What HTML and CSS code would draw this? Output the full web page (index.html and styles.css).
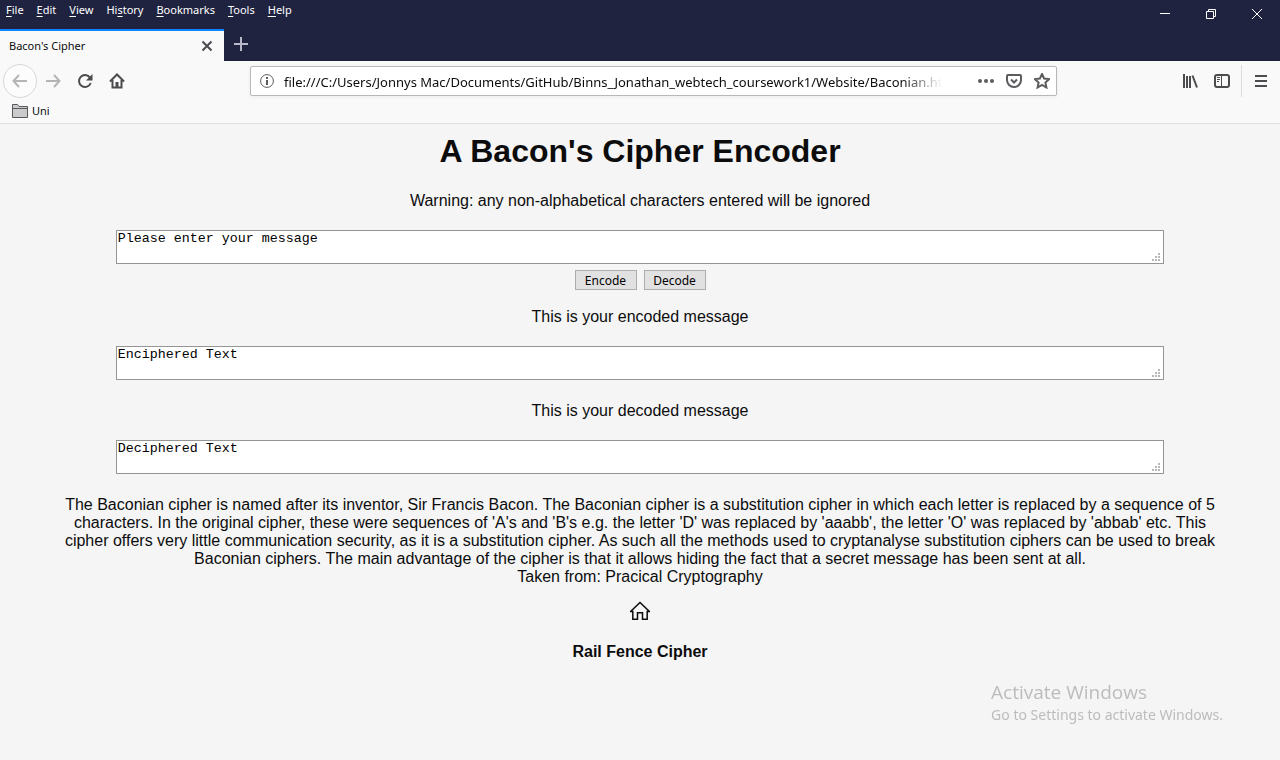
FILE: index.html
```html
<!DOCTYPE html>
<html lang="en">
<head>
<meta charset="utf-8">
<title>Bacon's Cipher</title>
<link rel="stylesheet" href="styles.css">
</head>
<body>
<header class="browser">
  <div class="titlebar">
    <nav class="menu" aria-label="Menu bar">
      <button><u>F</u>ile</button>
      <button><u>E</u>dit</button>
      <button><u>V</u>iew</button>
      <button>Hi<u>s</u>tory</button>
      <button><u>B</u>ookmarks</button>
      <button><u>T</u>ools</button>
      <button><u>H</u>elp</button>
    </nav>
    <div class="window-controls">
      <button aria-label="Minimize"><svg width="12" height="12" viewBox="0 0 12 12"><path d="M1 5.500h10"/></svg></button>
      <button aria-label="Restore"><svg width="12" height="12" viewBox="0 0 12 12"><path d="M1.500 3.500h7v7h-7zM3.500 3.500v-2h7v7h-2"/></svg></button>
      <button aria-label="Close"><svg width="12" height="12" viewBox="0 0 12 12"><path d="M1 1l10 10M11 1L1 11"/></svg></button>
    </div>
  </div>
  <div class="tabs">
    <div class="tab">
      <span class="tab-title">Bacon's Cipher</span>
      <button class="tab-close" aria-label="Close tab"><svg width="12" height="12" viewBox="0 0 12 12"><path d="M1.500 1.500l9 9M10.500 1.500l-9 9"/></svg></button>
    </div>
    <button class="new-tab" aria-label="New tab"><svg width="16" height="16" viewBox="0 0 16 16"><path d="M8 1v14M1 8h14"/></svg></button>
  </div>
  <div class="toolbar">
    <div class="nav-buttons">
      <button class="back" aria-label="Back"><svg class="faded" width="16" height="16" viewBox="0 0 16 16"><path d="M15 8H1.500M7 2L1.500 8 7 14"/></svg></button>
      <button aria-label="Forward"><svg class="faded" width="16" height="16" viewBox="0 0 16 16"><path d="M1 8h13.500M9 2l5.500 6L9 14"/></svg></button>
      <button aria-label="Reload"><svg width="16" height="16" viewBox="0 0 16 16"><path d="M13 4.600A6 6 0 1 0 13.700 10"/><path class="solid" d="M15.500 1v6.500H9z"/></svg></button>
      <button aria-label="Home"><svg width="16" height="16" viewBox="0 0 16 16"><path d="M1 8.500L8 1.500l7 7M3.500 7v7.500h9V7"/><path class="solid" d="M6.500 9h3v6h-3z"/></svg></button>
    </div>
    <div class="urlbar">
      <svg class="info" width="14" height="14" viewBox="0 0 14 14"><circle cx="7" cy="7" r="6.400"/><path class="stem" d="M7 6v5M7 3v2"/></svg>
      <input class="url" aria-label="Address" value="file:///C:/Users/Jonnys Mac/Documents/GitHub/Binns_Jonathan_webtech_coursework1/Website/Baconian.html">
      <button aria-label="Page actions"><svg width="16" height="16" viewBox="0 0 16 16"><g class="solid"><circle cx="2" cy="8" r="2"/><circle cx="8" cy="8" r="2"/><circle cx="14" cy="8" r="2"/></g></svg></button>
      <button aria-label="Save to Pocket"><svg width="16" height="16" viewBox="0 0 16 16"><path d="M2 2h12q1 0 1 1v4a7 7 0 0 1-14 0V3q0-1 1-1zM5 6.500l3 3 3-3"/></svg></button>
      <button aria-label="Bookmark this page"><svg width="16" height="16" viewBox="0 0 16 16"><path d="M8 1l2.100 4.500 5 .6-3.700 3.400 1 5L8 12l-4.400 2.500 1-5L.9 6.100l5-.6z"/></svg></button>
    </div>
    <div class="tools">
      <button aria-label="Library"><svg width="16" height="16" viewBox="0 0 16 16"><path d="M2 1v14M5 3v12M8 3v12M10.500 2.500l4.500 12"/></svg></button>
      <button aria-label="Sidebars"><svg width="16" height="16" viewBox="0 0 16 16"><rect x="1" y="2" width="14" height="12" rx="2"/><path class="thin" d="M7.500 2v12M3 4.500h3M3 6.500h3M3 8.500h2"/></svg></button>
      <button class="app-menu" aria-label="Open menu"><svg width="16" height="16" viewBox="0 0 16 16"><path d="M2 3h12M2 8h12M2 13h12"/></svg></button>
    </div>
  </div>
  <div class="bookmarks">
    <button class="bookmark"><svg width="16" height="14" viewBox="0 0 16 14"><path d="M.5 13.500V.5h5l1.500 2h8.500v11zM.5 4.500h15"/></svg>Uni</button>
  </div>
</header>

<main class="page">
  <h1>A Bacon's Cipher Encoder</h1>
  <p><label for="message">Warning: any non-alphabetical characters entered will be ignored</label></p>
  <div class="field"><textarea id="message" rows="2">Please enter your message</textarea><svg class="grip" width="9" height="9" viewBox="0 0 9 9"><path d="M6 0h2v2H6zM3 3h2v2H3zM6 3h2v2H6zM0 6h2v2H0zM3 6h2v2H3zM6 6h2v2H6z"/></svg></div>
  <div class="actions"><button>Encode</button><button>Decode</button></div>
  <p class="encoded-label"><label for="encoded">This is your encoded message</label></p>
  <div class="field"><textarea id="encoded" rows="2">Enciphered Text</textarea><svg class="grip" width="9" height="9" viewBox="0 0 9 9"><path d="M6 0h2v2H6zM3 3h2v2H3zM6 3h2v2H6zM0 6h2v2H0zM3 6h2v2H3zM6 6h2v2H6z"/></svg></div>
  <p><label for="decoded">This is your decoded message</label></p>
  <div class="field"><textarea id="decoded" rows="2">Deciphered Text</textarea><svg class="grip" width="9" height="9" viewBox="0 0 9 9"><path d="M6 0h2v2H6zM3 3h2v2H3zM6 3h2v2H6zM0 6h2v2H0zM3 6h2v2H3zM6 6h2v2H6z"/></svg></div>
  <p class="about">The Baconian cipher is named after its inventor, Sir Francis Bacon. The Baconian cipher is a substitution cipher in which each letter is replaced by a sequence of 5 characters. In the original cipher, these were sequences of 'A's and 'B's e.g. the letter 'D' was replaced by 'aaabb', the letter 'O' was replaced by 'abbab' etc. This cipher offers very little communication security, as it is a substitution cipher. As such all the methods used to cryptanalyse substitution ciphers can be used to break Baconian ciphers. The main advantage of the cipher is that it allows hiding the fact that a secret message has been sent at all.<br>Taken from: Pracical Cryptography</p>
  <a class="home" href="#" aria-label="Home"><svg width="20" height="20" viewBox="0 0 20 20"><path d="M.6 10.500h2.200v7.800h4.700v-6.500h5v6.500h4.700v-7.800h2.200L10 1.500z"/></svg></a>
  <a class="next" href="#">Rail Fence Cipher</a>
</main>

<aside class="watermark">
  <div class="watermark-title">Activate Windows</div>
  <div>Go to Settings to activate Windows.</div>
</aside>
</body>
</html>
```

FILE: styles.css
```css
* { box-sizing: border-box; }

body {
  margin: 0;
  min-height: 100vh;
  background: #f5f5f5;
  color: #0c0c0d;
  font: 16px/18px "Liberation Sans", Arial, sans-serif;
}

button { margin: 0; padding: 0; border: 0; background: none; color: inherit; font: inherit; }

svg { display: block; fill: none; stroke: currentColor; }

/* Browser window */
.browser {
  background: #f9f9fa;
  border-bottom: 1px solid #e0e0e1;
  color: #0c0c0d;
  font: 12px/16px "Noto Sans", "Open Sans", sans-serif;
}

.titlebar { display: flex; justify-content: space-between; height: 29px; background: #202340; color: #fff; }
.menu { display: flex; align-items: flex-start; gap: 13px; padding: 2px 6px; font-size: 11px; }
.menu u { text-underline-offset: 2px; }
.window-controls { display: flex; }
.window-controls button { display: grid; place-items: center; width: 46px; height: 28px; }

.tabs { display: flex; height: 32px; background: #202340; }
.tab {
  display: flex;
  align-items: center;
  justify-content: space-between;
  width: 224px;
  padding: 0 11px 0 9px;
  border-top: 2px solid #0a84ff;
  background: #f9f9fa;
  font-size: 11px;
}
.tab-close { color: #4a4a4f; }
.tab-close svg { stroke-width: 2; }
.new-tab { display: grid; place-items: center; width: 34px; height: 30px; color: #b8b8ca; }
.new-tab svg { stroke-width: 2; }

.toolbar { display: flex; align-items: center; height: 40px; color: #4c4c4f; }
.toolbar svg { stroke-width: 2; }
.toolbar .faded { color: #b5b5b6; }
.toolbar .thin { stroke-width: 1; }
.solid { fill: currentColor; stroke: none; }
.nav-buttons { display: flex; align-items: center; width: 250px; padding-left: 3px; }
.nav-buttons button { display: grid; place-items: center; width: 32px; height: 34px; }
.nav-buttons .back { width: 34px; border: 1px solid #d7d7d8; border-radius: 50%; background: #fcfcfc; }

.urlbar {
  display: flex;
  flex: 1;
  align-items: center;
  gap: 12px;
  min-width: 0;
  height: 30px;
  padding: 0 6px 0 9px;
  border: 1px solid #b8b8b9;
  border-radius: 2px;
  background: #fff;
  box-shadow: 0 1px 4px rgba(0, 0, 0, .06);
  color: #5c5c5f;
}
.toolbar .info { flex: none; margin-right: -2px; stroke-width: 1; }
.info .stem { stroke-width: 2; }
.url {
  flex: 1;
  min-width: 0;
  height: 24px;
  margin-right: 24px;
  padding: 2px 0 0;
  border: 0;
  outline: 0;
  background: none;
  color: #0c0c0d;
  font: 13px/18px "Noto Sans", "Open Sans", sans-serif;
  -webkit-mask-image: linear-gradient(to left, transparent, #000 40px);
  mask-image: linear-gradient(to left, transparent, #000 40px);
}

.tools { display: flex; align-items: center; justify-content: flex-end; width: 223px; }
.tools button { display: grid; place-items: center; width: 32px; height: 32px; }
.tools .app-menu { width: 39px; margin-left: 3px; border-left: 1px solid #dcdcdd; }

.bookmarks { display: flex; height: 22px; padding-left: 12px; }
.bookmark { display: flex; align-items: center; gap: 4px; height: 20px; font-size: 11px; }
.bookmark svg { color: #59595b; fill: #cbcbcd; }

/* Cipher page */
.page { width: 90%; margin: 0 auto; padding: 9px 0 16px; text-align: center; }
.page h1 { margin: 0 0 22px; font-size: 32px; line-height: 37px; }
.page p { margin: 22px 0 20px; }
.field { position: relative; width: 91%; margin: 0 auto; }
.field textarea {
  display: block;
  width: 100%;
  height: 34px;
  padding: 0 1px;
  border: 1px solid #959595;
  border-radius: 0;
  outline: 0;
  background: #fff;
  color: #000;
  font-family: "Liberation Mono", "Courier New", monospace;
  line-height: 15px;
  overflow: hidden;
  resize: none;
}
.grip { position: absolute; right: 3px; bottom: 2px; fill: #b8b8b8; stroke: none; pointer-events: none; }
.actions { display: flex; justify-content: center; gap: 7px; margin-top: 6px; }
.actions button {
  min-width: 62px;
  height: 20px;
  padding-top: 1px;
  border: 1px solid #adadad;
  background: #e1e1e1;
  color: #000;
  font: 12px/17px "Noto Sans", "Open Sans", sans-serif;
}
.page .encoded-label { margin-top: 18px; }
.page .about { margin-bottom: 15px; }
.home { display: block; width: 20px; margin: 0 auto 22px; color: #0c0c0d; }
.home svg { stroke-width: 1.500; }
.next { color: #0c0c0d; font-weight: bold; text-decoration: none; }

/* Floats over the bottom right corner of the desktop */
.watermark {
  position: fixed;
  right: 57px;
  bottom: 35px;
  color: #bcbcbc;
  font: 14px/20px "Noto Sans", "Open Sans", sans-serif;
  pointer-events: none;
}
.watermark-title { font-family: "Open Sans", "Noto Sans", sans-serif; font-size: 19px; line-height: 26px; }
```
